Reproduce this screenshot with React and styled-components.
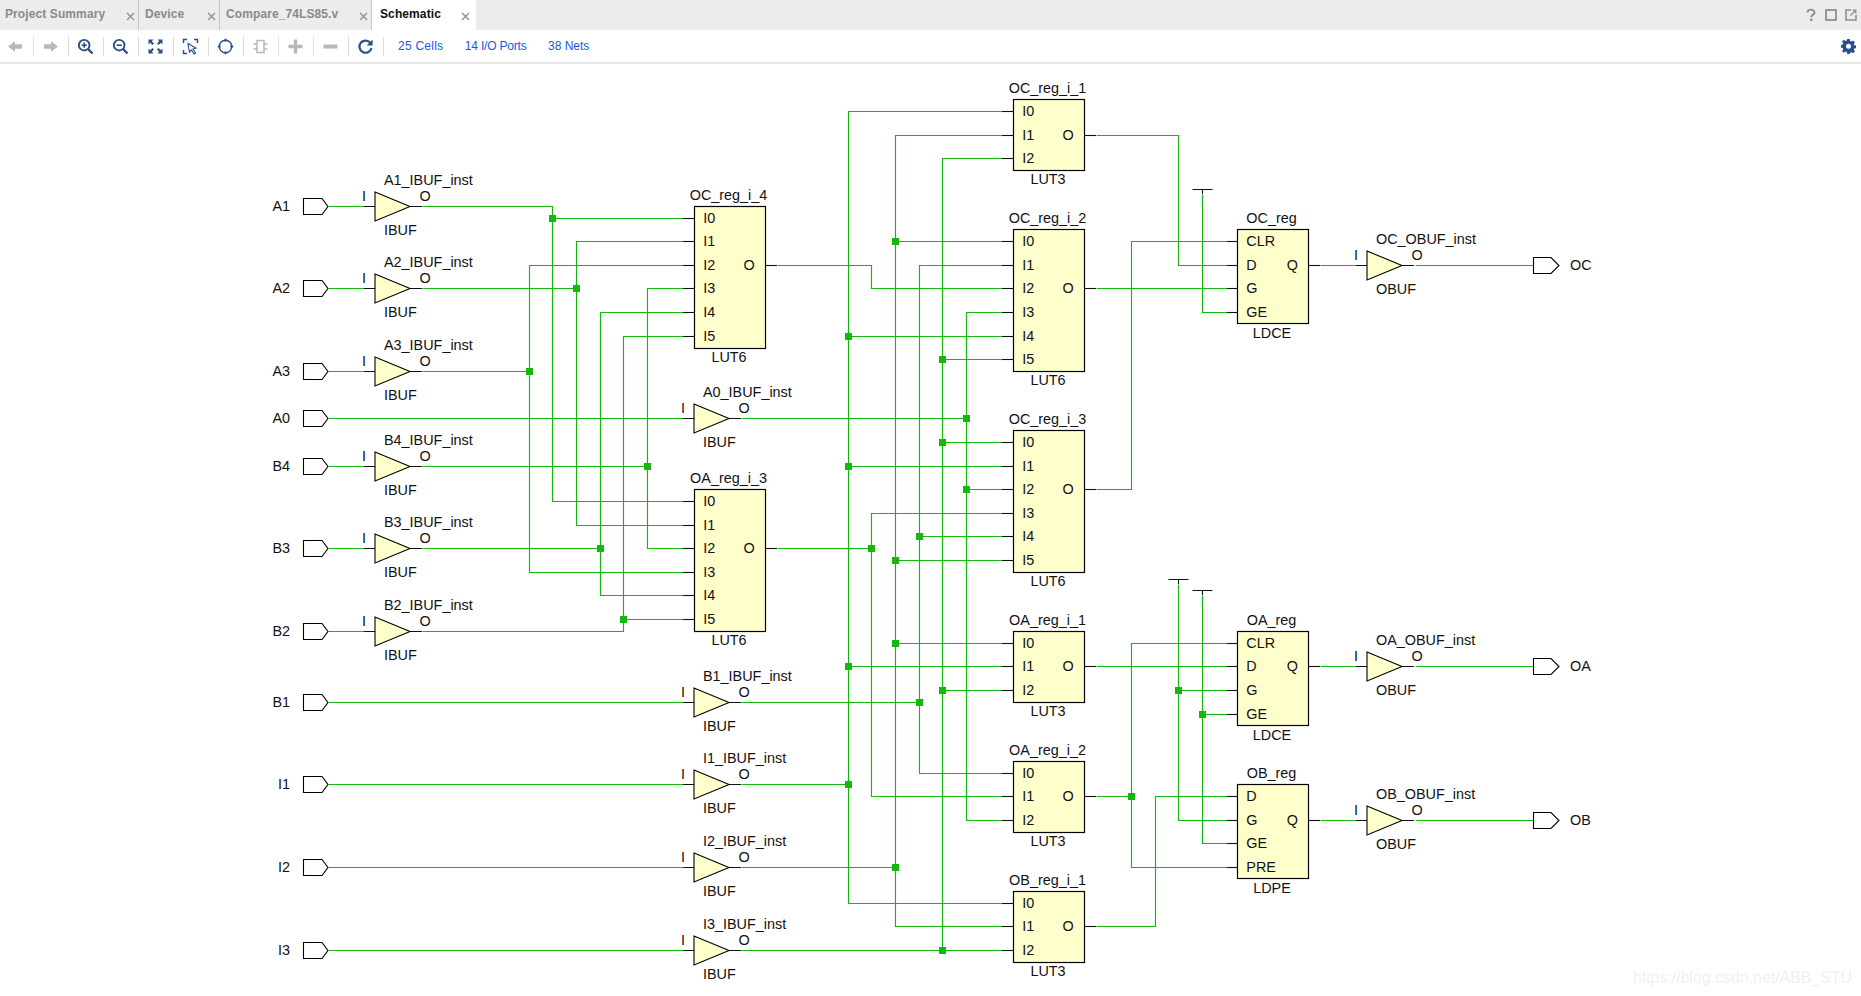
import React from 'react';
import styled, { createGlobalStyle } from 'styled-components';

const Global = createGlobalStyle`
  html, body { margin: 0; padding: 0; background: #fff; overflow: hidden; }
  body { font-family: "Liberation Sans", Arial, sans-serif; }
`;

const Page = styled.div`
  width: 1861px;
  height: 996px;
  display: flex;
  flex-direction: column;
  position: relative;
  overflow: hidden;
`;

const TabBar = styled.div`
  height: 30px;
  flex: none;
  display: flex;
  background: #ececec;
`;

const Tab = styled.div`
  width: ${p => p.$w}px;
  flex: none;
  box-sizing: border-box;
  display: flex;
  align-items: center;
  justify-content: space-between;
  padding: 0 ${p => (p.$active ? 6 : 3)}px 2px ${p => p.$pl}px;
  background: ${p => (p.$active ? '#ffffff' : '#ececec')};
  border-right: ${p => (p.$active ? 'none' : '1.5px solid #c6c6c6')};
`;

const TabLabel = styled.span`
  font-size: 12px;
  letter-spacing: 0.1px;
  font-weight: 700;
  color: ${p => (p.$active ? '#111' : '#8a8a8a')};
  white-space: nowrap;
`;

const TabClose = styled.svg`
  width: 9px;
  height: 9px;
  margin-top: 4px;
  flex: none;
  stroke: #8e8e8e;
  stroke-width: 1.3;
`;

const WindowTools = styled.div`
  margin-left: auto;
  display: flex;
  align-items: center;
  gap: 8px;
  padding-right: 4px;
`;

const Toolbar = styled.div`
  height: 32px;
  flex: none;
  display: flex;
  align-items: center;
  background: #fff;
`;

const ToolCell = styled.div`
  width: 35px;
  height: 19px;
  flex: none;
  box-sizing: border-box;
  margin-left: ${p => (p.$first ? '-1.5px' : '0')};
  display: flex;
  align-items: center;
  justify-content: center;
  border-right: 1px solid #dcdcdc;
`;

const Links = styled.div`
  display: flex;
  align-items: center;
  gap: 21.5px;
  margin-left: 14.5px;
`;

const Link = styled.span`
  font-size: 12px;
  letter-spacing: ${p => p.$spacing}px;
  color: #1c55ea;
  white-space: nowrap;
`;

const Gear = styled.div`
  margin-left: auto;
  padding-right: 5px;
  display: flex;
  align-items: center;
`;

const Divider = styled.div`
  height: 2px;
  flex: none;
  background: #e6e6e6;
`;

const Canvas = styled.div`
  flex: 1;
  position: relative;
  min-height: 0;
`;

const Sheet = styled.svg`
  display: block;
  width: 1861px;
  height: 932px;
`;

const Watermark = styled.div`
  position: absolute;
  right: 9px;
  bottom: 9px;
  font-size: 15.9px;
  color: #efefef;
  filter: blur(0.3px);
  white-space: nowrap;
`;

const Wire = styled.path`
  fill: none;
  stroke: #14b80c;
  stroke-width: 1.15;
`;

const Stub = styled.path`
  fill: none;
  stroke: #111;
  stroke-width: 1.1;
`;

const Dot = styled.rect`
  fill: #14b80c;
`;

const CellBox = styled.rect`
  fill: #ffffcc;
  stroke: #000;
  stroke-width: 1.2;
`;

const Buffer = styled.path`
  fill: #ffffcc;
  stroke: #000;
  stroke-width: 1.1;
`;

const PortShape = styled.path`
  fill: #fff;
  stroke: #000;
  stroke-width: 1.1;
`;

const Label = styled.text`
  font-family: "Liberation Sans", Arial, sans-serif;
  font-size: 14.4px;
  fill: #111;
  text-anchor: ${p => p.$anchor || 'start'};
`;

/* ---------- data ---------- */
const R = { A1: 206, A2: 288, A3: 371, A0: 418, B4: 466, B3: 548, B2: 631, B1: 702, I1: 784, I2: 867, I3: 950 };

const inputs = [
  ['A1', 'A1_IBUF_inst', 'L'], ['A2', 'A2_IBUF_inst', 'L'], ['A3', 'A3_IBUF_inst', 'L'],
  ['A0', 'A0_IBUF_inst', 'M'], ['B4', 'B4_IBUF_inst', 'L'], ['B3', 'B3_IBUF_inst', 'L'],
  ['B2', 'B2_IBUF_inst', 'L'], ['B1', 'B1_IBUF_inst', 'M'], ['I1', 'I1_IBUF_inst', 'M'],
  ['I2', 'I2_IBUF_inst', 'M'], ['I3', 'I3_IBUF_inst', 'M'],
];

const L = 694, M = 1013, G = 1237;
const cells = [
  { x: L, top: 206, bot: 348, name: 'OC_reg_i_4', type: 'LUT6', pins: [['I0', 218], ['I1', 241], ['I2', 265], ['I3', 288], ['I4', 312], ['I5', 336]], out: ['O', 265] },
  { x: L, top: 489, bot: 631, name: 'OA_reg_i_3', type: 'LUT6', pins: [['I0', 501], ['I1', 525], ['I2', 548], ['I3', 572], ['I4', 595], ['I5', 619]], out: ['O', 548] },
  { x: M, top: 99, bot: 170, name: 'OC_reg_i_1', type: 'LUT3', pins: [['I0', 111], ['I1', 135], ['I2', 158]], out: ['O', 135] },
  { x: M, top: 229, bot: 371, name: 'OC_reg_i_2', type: 'LUT6', pins: [['I0', 241], ['I1', 265], ['I2', 288], ['I3', 312], ['I4', 336], ['I5', 359]], out: ['O', 288] },
  { x: M, top: 430, bot: 572, name: 'OC_reg_i_3', type: 'LUT6', pins: [['I0', 442], ['I1', 466], ['I2', 489], ['I3', 513], ['I4', 536], ['I5', 560]], out: ['O', 489] },
  { x: M, top: 631, bot: 702, name: 'OA_reg_i_1', type: 'LUT3', pins: [['I0', 643], ['I1', 666], ['I2', 690]], out: ['O', 666] },
  { x: M, top: 761, bot: 832, name: 'OA_reg_i_2', type: 'LUT3', pins: [['I0', 773], ['I1', 796], ['I2', 820]], out: ['O', 796] },
  { x: M, top: 891, bot: 962, name: 'OB_reg_i_1', type: 'LUT3', pins: [['I0', 903], ['I1', 926], ['I2', 950]], out: ['O', 926] },
  { x: G, top: 229, bot: 323, name: 'OC_reg', type: 'LDCE', pins: [['CLR', 241], ['D', 265], ['G', 288], ['GE', 312]], out: ['Q', 265] },
  { x: G, top: 631, bot: 725, name: 'OA_reg', type: 'LDCE', pins: [['CLR', 643], ['D', 666], ['G', 690], ['GE', 714]], out: ['Q', 666] },
  { x: G, top: 784, bot: 878, name: 'OB_reg', type: 'LDPE', pins: [['D', 796], ['G', 820], ['GE', 843], ['PRE', 867]], out: ['Q', 820] },
];

const outputs = [['OC', 'OC_OBUF_inst', 265], ['OA', 'OA_OBUF_inst', 666], ['OB', 'OB_OBUF_inst', 820]];

const LI = 683, MI = 1002, GI = 1227, LO = 777, MO = 1096, GO = 1320;

const wires = [
  [[422, 206], [552, 206], [552, 501], [LI, 501]], [[552, 218], [LI, 218]],
  [[422, 288], [576, 288]], [[LI, 241], [576, 241], [576, 525], [LI, 525]],
  [[422, 371], [529, 371]], [[LI, 265], [529, 265], [529, 572], [LI, 572]],
  [[422, 466], [647, 466]], [[LI, 288], [647, 288], [647, 548], [LI, 548]],
  [[422, 548], [600, 548]], [[LI, 312], [600, 312], [600, 595], [LI, 595]],
  [[422, 631], [623, 631], [623, 336], [LI, 336]], [[623, 619], [LI, 619]],
  [[LO, 265], [871, 265], [871, 288], [MI, 288]],
  [[LO, 548], [871, 548]], [[MI, 513], [871, 513], [871, 796], [MI, 796]],
  [[741, 418], [966, 418]], [[MI, 312], [966, 312], [966, 820], [MI, 820]], [[966, 489], [MI, 489]],
  [[741, 702], [919, 702]], [[MI, 265], [919, 265], [919, 773], [MI, 773]], [[919, 536], [MI, 536]],
  [[741, 784], [848, 784]], [[MI, 111], [848, 111], [848, 903], [MI, 903]], [[848, 336], [MI, 336]], [[848, 466], [MI, 466]], [[848, 666], [MI, 666]],
  [[741, 867], [895, 867]], [[MI, 135], [895, 135], [895, 926], [MI, 926]], [[895, 241], [MI, 241]], [[895, 560], [MI, 560]], [[895, 643], [MI, 643]],
  [[741, 950], [MI, 950]], [[MI, 158], [942, 158], [942, 950]], [[942, 359], [MI, 359]], [[942, 442], [MI, 442]], [[942, 690], [MI, 690]],
  [[MO, 135], [1178, 135], [1178, 265], [GI, 265]],
  [[MO, 288], [GI, 288]],
  [[MO, 489], [1131, 489], [1131, 241], [GI, 241]],
  [[1202, 194], [1202, 312], [GI, 312]],
  [[MO, 666], [GI, 666]],
  [[1178, 584], [1178, 820], [GI, 820]], [[1178, 690], [GI, 690]],
  [[1202, 595], [1202, 843], [GI, 843]], [[1202, 714], [GI, 714]],
  [[MO, 796], [1131, 796]], [[GI, 643], [1131, 643], [1131, 867], [GI, 867]],
  [[MO, 926], [1155, 926], [1155, 796], [GI, 796]],
  ...outputs.flatMap(([, , y]) => [[[GO, y], [1356, y]], [[1415, y], [1533, y]]]),
  ...inputs.map(([k, , c]) => [[328, R[k]], [c === 'L' ? 364 : LI, R[k]]]),
];

const dots = [
  [552, 218], [576, 288], [529, 371], [647, 466], [600, 548], [623, 619],
  [966, 418], [966, 489], [942, 359], [942, 442], [942, 690], [942, 950],
  [848, 336], [848, 466], [848, 666], [848, 784],
  [895, 241], [895, 560], [895, 643], [895, 867],
  [919, 536], [919, 702], [871, 548], [1131, 796],
  [1178, 690], [1202, 714],
];

const ties = [[1202, 189], [1178, 579], [1202, 590]];

const d = pts => pts.map(([x, y], i) => `${i ? 'L' : 'M'}${x + 0.5} ${y + 0.5}`).join('');

/* ---------- schematic parts ---------- */
const InPort = ({ name }) => {
  const y = R[name] + 0.5;
  return (
    <>
      <PortShape d={`M303.5 ${y - 8}H322L328 ${y}L322 ${y + 8}H303.5Z`} />
      <Label $anchor="end" x={290} y={y + 4}>{name}</Label>
    </>
  );
};

const Buf = ({ x, y, name, type }) => (
  <>
    <Stub d={`M${x - 11} ${y}H${x}M${x + 35} ${y}H${x + 47}`} />
    <Buffer d={`M${x} ${y - 14.5}L${x + 35} ${y}L${x} ${y + 14.5}Z`} />
    <Label $anchor="middle" x={x - 11} y={y - 5.5}>I</Label>
    <Label $anchor="middle" x={x + 50} y={y - 5.5}>O</Label>
    <Label x={x + 9} y={y - 22}>{name}</Label>
    <Label x={x + 9} y={y + 28}>{type}</Label>
  </>
);

const Cell = ({ c }) => {
  const w = 71;
  const cx = c.x + w / 2 - 1;
  return (
    <>
      {c.pins.map(([, y]) => <Stub key={y} d={`M${c.x - (c.x === G ? 10 : 11)} ${y + 0.5}H${c.x}`} />)}
      <Stub d={`M${c.x + w} ${c.out[1] + 0.5}H${c.x + w + 12}`} />
      <CellBox x={c.x + 0.5} y={c.top + 0.5} width={w} height={c.bot - c.top} />
      {c.pins.map(([p, y]) => <Label key={p} x={c.x + 9.3} y={y + 4.5}>{p}</Label>)}
      <Label $anchor="middle" x={c.x + (c.x === G ? 55.3 : 55)} y={c.out[1] + 4.5}>{c.out[0]}</Label>
      <Label $anchor="middle" x={cx} y={c.top - 6.5}>{c.name}</Label>
      <Label $anchor="middle" x={cx + 0.5} y={c.bot + (c.x === G ? 15 : 14)}>{c.type}</Label>
    </>
  );
};

const OutPort = ({ name, y }) => (
  <>
    <PortShape d={`M1533.5 ${y - 8}H1551L1559 ${y}L1551 ${y + 8}H1533.5Z`} />
    <Label x={1570} y={y + 4}>{name}</Label>
  </>
);

/* ---------- toolbar icons ---------- */
const G1 = '#b8b8b8';
const B1 = '#2c4f86';
const Ico = ({ children, size = 17, box = 17 }) => (
  <svg width={size} height={size} viewBox={`0 0 ${box} ${box}`}>{children}</svg>
);

const Mag = ({ plus }) => (
  <Ico>
    <circle cx="7.2" cy="7.2" r="5.3" fill="none" stroke={B1} strokeWidth="1.9" />
    <path d="M11 11L15.5 15.5" stroke={B1} strokeWidth="2.4" />
    <path d={plus ? 'M4.6 7.2H9.8M7.2 4.6V9.8' : 'M4.6 7.2H9.8'} stroke={B1} strokeWidth="1.6" />
  </Ico>
);

const icons = [
  <Ico key="b"><path d="M1 8.5L8 3.2V6.2H15V10.8H8V13.8Z" fill={G1} /></Ico>,
  <Ico key="f"><path d="M16 8.5L9 3.2V6.2H2V10.8H9V13.8Z" fill={G1} /></Ico>,
  <Mag key="zi" plus />,
  <Mag key="zo" />,
  <Ico key="fit">
    <path d="M1.5 1.5H6.5L4.8 3.2L7 5.4L5.4 7L3.2 4.8L1.5 6.5ZM15.5 1.5V6.5L13.8 4.8L11.6 7L10 5.4L12.2 3.2L10.5 1.5ZM1.5 15.5V10.5L3.2 12.2L5.4 10L7 11.6L4.8 13.8L6.5 15.5ZM15.5 15.5H10.5L12.2 13.8L10 11.6L11.6 10L13.8 12.2L15.5 10.5Z" fill={B1} />
  </Ico>,
  <Ico key="sel">
    <path d="M5 1.5H1.5V5M12 1.5H15.5V5M1.5 12V15.5H5" fill="none" stroke={B1} strokeWidth="1.5" />
    <path d="M6 5.5L14 10L11 11L13.5 15L12 16L9.5 12L7.5 14Z" fill="#fff" stroke={B1} strokeWidth="1.1" />
  </Ico>,
  <Ico key="tgt">
    <circle cx="8.5" cy="8.5" r="6.2" fill="none" stroke={B1} strokeWidth="1.4" />
    <path d="M8.5 0.8V3.6M8.5 13.4V16.2M0.8 8.5H3.6M13.4 8.5H16.2" stroke={B1} strokeWidth="1.9" />
  </Ico>,
  <Ico key="chip">
    <path d="M5 2.5H12V14.5H5Z" fill="#fff" stroke={G1} strokeWidth="1.5" />
    <path d="M1.5 6H5M1.5 11H5M12 6H15.5M12 11H15.5" stroke={G1} strokeWidth="1.6" />
  </Ico>,
  <Ico key="plus"><path d="M8.5 1.5V15.5M1.5 8.5H15.5" stroke={G1} strokeWidth="3.4" /></Ico>,
  <Ico key="minus"><path d="M1.5 8.5H15.5" stroke={G1} strokeWidth="4" /></Ico>,
  <Ico key="ref">
    <path d="M13.6 5.2A6.1 6.1 0 1 0 14.5 10" fill="none" stroke={B1} strokeWidth="2.2" />
    <path d="M15.6 1.4V7.6H9.6Z" fill={B1} />
  </Ico>,
];

const tabs = [
  { label: 'Project Summary', w: 139, pl: 5 },
  { label: 'Device', w: 81, pl: 6 },
  { label: 'Compare_74LS85.v', w: 152, pl: 6 },
  { label: 'Schematic', w: 104, pl: 8, active: true },
];

const CloseGlyph = () => (
  <TabClose viewBox="0 0 9 9"><path d="M1 1L8 8M8 1L1 8" /></TabClose>
);

export default function App() {
  return (
    <Page>
      <Global />
      <TabBar>
        {tabs.map(t => (
          <Tab key={t.label} $w={t.w} $pl={t.pl} $active={t.active}>
            <TabLabel $active={t.active}>{t.label}</TabLabel>
            <CloseGlyph />
          </Tab>
        ))}
        <WindowTools>
          <svg width="12" height="14" viewBox="0 0 12 14">
            <path d="M2.5 4.6C2.5 2.6 4 1.6 6 1.6S9.5 2.8 9.5 4.5C9.5 7 6.2 6.8 6.2 9.2" fill="none" stroke="#8f8f8f" strokeWidth="1.9" />
            <rect x="5" y="10.6" width="2.4" height="2.4" fill="#8f8f8f" />
          </svg>
          <svg width="12" height="12" viewBox="0 0 12 12">
            <rect x="1" y="1" width="10" height="10" fill="none" stroke="#8f8f8f" strokeWidth="1.8" />
          </svg>
          <svg width="12" height="12" viewBox="0 0 12 12">
            <path d="M6 1H1V11H11V6" fill="none" stroke="#8f8f8f" strokeWidth="1.6" />
            <path d="M5.5 6.5L10 2M7.5 1.2H10.8V4.5" fill="none" stroke="#8f8f8f" strokeWidth="1.3" />
          </svg>
        </WindowTools>
      </TabBar>
      <Toolbar>
        {icons.map((ic, i) => <ToolCell key={i} $first={i === 0}>{ic}</ToolCell>)}
        <Links>
          <Link $spacing={0.25}>25 Cells</Link>
          <Link $spacing={-0.2}>14 I/O Ports</Link>
          <Link $spacing={0}>38 Nets</Link>
        </Links>
        <Gear>
          <svg width="15" height="15" viewBox="0 0 24 24">
            <path fillRule="evenodd" fill="#2a4d8f" d="M10 1h4l.7 3.2 2 .8 2.8-1.8 2.8 2.8-1.8 2.8.8 2 3.2.7v4l-3.2.7-.8 2 1.8 2.8-2.8 2.8-2.8-1.8-2 .8L14 25h-4l-.7-3.2-2-.8-2.8 1.8-2.8-2.8 1.8-2.8-.8-2L0 14.5v-4l2.7-.7.8-2L1.7 5l2.8-2.8 2.8 1.8 2-.8zM12 8.5a4 4 0 1 0 0 8 4 4 0 0 0 0-8z" transform="translate(0 -1)" />
          </svg>
        </Gear>
      </Toolbar>
      <Divider />
      <Canvas>
        <Sheet viewBox="0 64 1861 932">
          {wires.map((w, i) => <Wire key={i} d={d(w)} />)}
          {dots.map(([x, y]) => <Dot key={`${x}-${y}`} x={x - 3} y={y - 3} width="7" height="7" />)}
          {ties.map(([x, y]) => (
            <Stub key={`${x}${y}`} d={`M${x - 9.5} ${y + 0.5}H${x + 10.5}M${x + 0.5} ${y + 0.5}V${y + 5}`} />
          ))}
          {inputs.map(([k]) => <InPort key={k} name={k} />)}
          {inputs.map(([k, name, c]) => (
            <Buf key={name} x={c === 'L' ? 375 : 694} y={R[k] + 0.5} name={name} type="IBUF" />
          ))}
          {cells.map(c => <Cell key={c.name} c={c} />)}
          {outputs.map(([p, name, y]) => (
            <React.Fragment key={p}>
              <Buf x={1367} y={y + 0.5} name={name} type="OBUF" />
              <OutPort name={p} y={y + 0.5} />
            </React.Fragment>
          ))}
        </Sheet>
        <Watermark>https://blog.csdn.net/ABB_STU</Watermark>
      </Canvas>
    </Page>
  );
}
